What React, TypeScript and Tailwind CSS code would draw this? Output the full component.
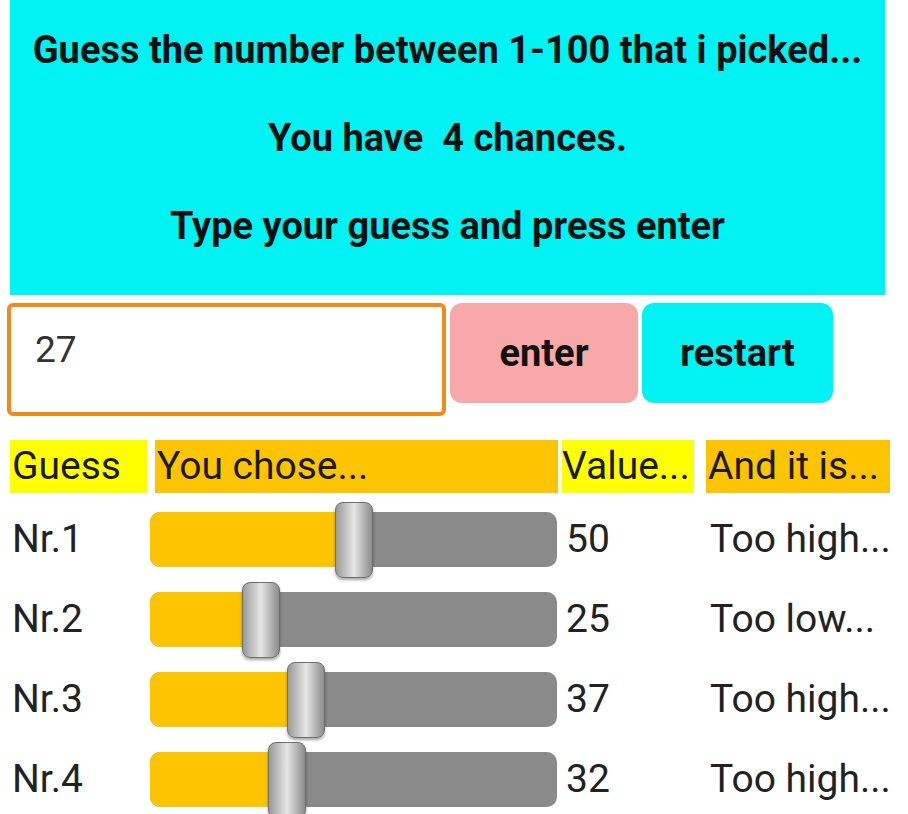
import React, { useState } from 'react';

interface Guess {
  label: string;
  value: number;
  verdict: string;
}

const guesses: Guess[] = [
  { label: 'Nr.1', value: 50, verdict: 'Too high...' },
  { label: 'Nr.2', value: 25, verdict: 'Too low...' },
  { label: 'Nr.3', value: 37, verdict: 'Too high...' },
  { label: 'Nr.4', value: 32, verdict: 'Too high...' },
];

// track is 407px wide, thumb 38px, so the thumb travels 369px over 0..100
const GuessSlider: React.FC<{ value: number }> = ({ value }) => {
  const left = (value / 100) * 369;
  return (
    <div className="relative h-[55px] w-[407px] rounded-[10px] bg-[#8a8a8a]">
      <div className="h-full rounded-l-[10px] bg-[#ffc400]" style={{ width: left + 19 }} />
      <div
        className="absolute top-[-10px] h-[76px] w-[38px] rounded-[8px] border border-[#6f6f6f] bg-gradient-to-r from-[#9a9a9a] via-[#e6e6e6] to-[#8c8c8c] shadow-[0_2px_3px_rgba(0,0,0,0.35)]"
        style={{ left }}
      />
    </div>
  );
};

const App: React.FC = () => {
  const [guess, setGuess] = useState('27');

  return (
    <div className="h-[814px] w-[908px] overflow-hidden bg-white font-['Roboto',sans-serif] text-[#1a1a1a]">
      <div className="mx-[10px] flex h-[295px] w-[875px] flex-col items-center gap-[43px] bg-[#00f2f2] pt-[28px] font-bold text-[38px] leading-[45px] text-[#111]">
        <p>Guess the number between 1-100 that i picked...</p>
        <p>You have&nbsp; 4 chances.</p>
        <p>Type your guess and press enter</p>
      </div>

      <div className="mt-[8px] flex items-start gap-[4px] pl-[7px]">
        <input
          value={guess}
          onChange={(e) => setGuess(e.target.value)}
          className="h-[113px] w-[439px] rounded-[6px] border-[4px] border-[#f28a1a] bg-white px-[24px] pb-[20px] text-[37px] text-[#333] outline-none"
        />
        <button className="h-[100px] w-[188px] rounded-[12px] bg-[#f9a8aa] text-[38px] font-bold text-[#111]">
          enter
        </button>
        <button className="h-[100px] w-[191px] rounded-[12px] bg-[#00f2f2] text-[38px] font-bold text-[#111]">
          restart
        </button>
      </div>

      <div className="mt-[24px] grid grid-cols-[140px_412px_144px_1fr] pl-[10px] pr-[18px] text-[39px] leading-[53px]">
        <div className="mr-[3px] bg-[#ffff00] pl-[2px]">Guess</div>
        <div className="ml-[5px] mr-[4px] bg-[#ffc400] pl-[2px]">You chose...</div>
        <div className="mr-[12px] bg-[#ffff00]">Value...</div>
        <div className="bg-[#ffc400] pl-[2px]">And it is...</div>
      </div>

      <div className="mt-[19px] flex flex-col gap-[25px] pl-[12px]">
        {guesses.map((g) => (
          <div key={g.label} className="flex h-[55px] items-center text-[39px] text-[#222]">
            <span className="w-[138px]">{g.label}</span>
            <GuessSlider value={g.value} />
            <span className="w-[153px] pl-[9px]">{g.value}</span>
            <span>{g.verdict}</span>
          </div>
        ))}
      </div>
    </div>
  );
};

export default App;
